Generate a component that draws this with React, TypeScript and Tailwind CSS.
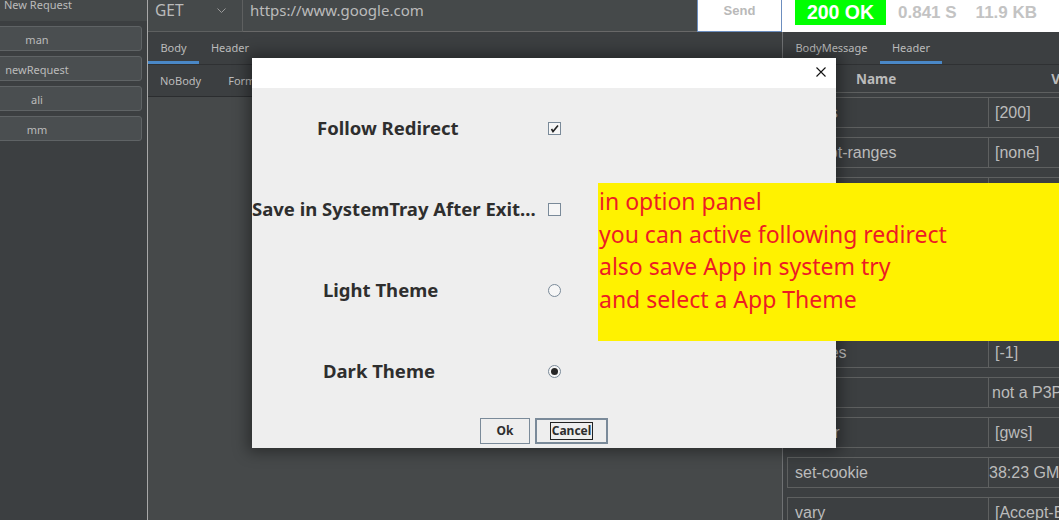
import React from 'react';

const requests = ['man', 'newRequest', 'ali', 'mm'];

const headers: { name: string; value: string; shift?: string }[] = [
  { name: 'status', value: '[200]' },
  { name: 'accept-ranges', value: '[none]' },
  { name: 'cache-control', value: '[private, max-age=0]' },
  { name: 'content-type', value: '[text/html; charset=ISO-8859-1]' },
  { name: 'date', value: '[Sat, 02 Oct 2021 08:38:23 GMT]' },
  { name: 'alt-svc', value: '[h3=":443"; ma=2592000]' },
  { name: 'expires', value: '[-1]' },
  { name: 'p3p', value: 'not a P3P policy! See g.co/p3phelp', shift: '-ml-[3px]' },
  { name: 'server', value: '[gws]' },
  { name: 'set-cookie', value: '38:23 GMT; path=/', shift: '-ml-[6px]' },
  { name: 'vary', value: '[Accept-Encoding]' },
];

// --- left list of saved requests ---
const Sidebar: React.FC = () => (
  <div className="w-[147px] h-full shrink-0 bg-[#3c3f41] overflow-hidden">
    <div className="h-[22px] bg-[#45494a] pl-[4px] text-[11px] leading-[11px] text-[#bbbbbb] whitespace-nowrap">
      <div className="-mt-[1px]">New Request</div>
    </div>
    <div className="flex flex-col gap-[5px] pt-[5px]">
      {requests.map((r) => (
        <div
          key={r}
          className="-ml-[68px] w-[210px] h-[25px] shrink-0 rounded-[3px] border border-[#5f6365] bg-[#4a4e50] flex items-center justify-center pt-[3px] text-[11px] text-[#bbbbbb]"
        >
          {r}
        </div>
      ))}
    </div>
  </div>
);

// --- request editor ---
const RequestPanel: React.FC = () => (
  <div className="w-[634px] h-full shrink-0 flex flex-col bg-[#46494a]">
    <div className="h-[32px] flex shrink-0">
      <div className="w-[95px] bg-[#45494a] border-r border-b border-[#5e6060] flex items-center justify-between pl-[7px] pr-[16px] text-[15.5px] text-[#bbbbbb]">
        <span className="-mt-[10px]">GET</span>
        <svg width="9" height="5" viewBox="0 0 9 5" className="-mt-[10px]">
          <path d="M0.5 0.5 L4.5 4.5 L8.5 0.5" fill="none" stroke="#9a9a9a" strokeWidth="1" />
        </svg>
      </div>
      <div className="flex-1 bg-[#45494a] border-b border-[#686868] pl-[7px] text-[15px] text-[#bbbbbb]">
        <span className="block -mt-[1px]">https://www.google.com</span>
      </div>
      <div className="w-[85px] bg-white border-l border-r border-b border-[#6c8ebf] flex justify-center font-['Liberation_Sans',sans-serif] font-bold text-[13px] text-[#b9b9b9]">
        <span className="mt-[1px]">Send</span>
      </div>
    </div>
    <div className="h-[33px] shrink-0 flex bg-[#3c3f41] border-b border-[#2f3133] text-[11px] text-[#bbbbbb]">
      <div className="w-[51px] flex items-center justify-center border-b-[3px] border-[#4a88c7] pt-[4px]">Body</div>
      <div className="w-[62px] flex items-center justify-center pt-[1px]">Header</div>
    </div>
    <div className="h-[32px] shrink-0 flex items-center gap-[27px] pl-[12px] pt-[2px] bg-[#3c3f41] border-b border-[#2b2d2f] text-[11px] text-[#bbbbbb]">
      <span>NoBody</span>
      <span>FormData</span>
    </div>
    <div className="flex-1" />
  </div>
);

// --- response viewer ---
const ResponsePanel: React.FC = () => (
  <div className="flex-1 h-full flex flex-col overflow-hidden">
    <div className="h-[32px] shrink-0 bg-white flex items-start pl-[13px] font-['Liberation_Sans',sans-serif] font-bold">
      <div className="w-[91px] h-[25px] bg-[#00ff00] text-white text-[19.5px] leading-[25px] text-center">200 OK</div>
      <span className="ml-[12px] text-[17px] leading-[25px] text-[#c3c3c3]">0.841 S</span>
      <span className="ml-[19px] text-[17px] leading-[25px] text-[#c3c3c3]">11.9 KB</span>
    </div>
    <div className="flex-1 flex flex-col bg-[#3c3f41] border-l border-[#6f7173]">
      <div className="h-[33px] shrink-0 flex border-b border-[#2f3133] text-[11px] text-[#bbbbbb]">
        <div className="w-[97px] flex items-center justify-center pt-[1px]">BodyMessage</div>
        <div className="w-[62px] flex items-center justify-center border-b-[3px] border-[#4a88c7] pt-[4px]">Header</div>
      </div>
      <div className="h-[28px] shrink-0 flex items-center border-b border-[#5e6060] pt-[1px] font-bold text-[13.5px] text-[#bbbbbb] whitespace-nowrap">
        <span className="ml-[73px]">Name</span>
        <span className="ml-[155px]">Value</span>
      </div>
      <div className="flex flex-col gap-[9px] pt-[4px] pl-[4px] font-['Liberation_Sans',sans-serif] text-[16px] text-[#bbbbbb]">
        {headers.map((h) => (
          <div key={h.name} className="h-[31px] shrink-0 flex">
            <div className="w-[202px] shrink-0 border border-[#5e6060] pl-[7px] pt-[1px] flex items-center">{h.name}</div>
            <div className="w-[220px] shrink-0 border-t border-b border-r border-[#5e6060] pl-[6px] pt-[1px] flex items-center overflow-hidden whitespace-nowrap">
              <span className={h.shift ?? ''}>{h.value}</span>
            </div>
          </div>
        ))}
      </div>
    </div>
  </div>
);

const CheckBox: React.FC<{ checked?: boolean }> = ({ checked }) => (
  <div className="w-[13px] h-[13px] shrink-0 border border-[#7a8a99] bg-[#f6f6f6] flex items-center justify-center">
    {checked && (
      <svg width="9" height="9" viewBox="0 0 9 9">
        <path d="M1.5 5 L3 7.5 L8 1.5" fill="none" stroke="#222" strokeWidth="1.6" />
      </svg>
    )}
  </div>
);

const Radio: React.FC<{ checked?: boolean }> = ({ checked }) => (
  <div className="w-[13px] h-[13px] shrink-0 rounded-full border border-[#7a8a99] bg-[#f6f6f6] flex items-center justify-center">
    {checked && <div className="w-[7px] h-[7px] rounded-full bg-[#262626]" />}
  </div>
);

// --- options dialog ---
const OptionsDialog: React.FC = () => {
  const rows: { label: string; pad: string; control: React.ReactNode }[] = [
    { label: 'Follow Redirect', pad: 'pl-[65px]', control: <CheckBox checked /> },
    { label: 'Save in SystemTray After Exit...', pad: 'pl-0', control: <CheckBox /> },
    { label: 'Light Theme', pad: 'pl-[71px]', control: <Radio /> },
    { label: 'Dark Theme', pad: 'pl-[71px]', control: <Radio checked /> },
  ];

  return (
    <div className="absolute left-[252px] top-[58px] w-[584px] h-[390px] bg-[#eeeeee] flex flex-col shadow-[0_0_14px_4px_rgba(0,0,0,0.4)]">
      <div className="h-[30px] shrink-0 bg-white flex justify-end pr-[10px] pt-[9px]">
        <svg width="10" height="10" viewBox="0 0 10 10">
          <path d="M0.5 0.5 L9.5 9.5 M9.5 0.5 L0.5 9.5" stroke="#111" strokeWidth="1.1" />
        </svg>
      </div>
      {rows.map((r) => (
        <div key={r.label} className="h-[81px] shrink-0 flex items-center">
          <div className={`w-[296px] shrink-0 overflow-hidden whitespace-nowrap font-bold text-[18.5px] text-[#2e2e2e] -mt-[2px] ${r.pad}`}>
            {r.label}
          </div>
          {r.control}
        </div>
      ))}
      <div className="flex justify-center gap-[5px] pt-[6px] font-bold text-[12px] text-[#2e2e2e]">
        <div className="w-[50px] h-[26px] border border-[#7a8a99] bg-[#eeeeee] flex items-center justify-center">Ok</div>
        <div className="w-[73px] h-[26px] border-2 border-[#7a8a99] bg-[#eeeeee] flex items-center justify-center">
          <span className="h-[18px] px-[1px] border border-[#222] leading-[16px]">Cancel</span>
        </div>
      </div>
    </div>
  );
};

const App: React.FC = () => (
  <div className="relative w-[1059px] h-[520px] overflow-hidden flex bg-[#3c3f41] font-['Noto_Sans',sans-serif]">
    <Sidebar />
    <div className="w-px h-full shrink-0 bg-[#a8a8a8]" />
    <RequestPanel />
    <ResponsePanel />
    <OptionsDialog />
    <div className="absolute left-[598px] top-[183px] w-[461px] h-[158px] bg-[#fff200] pl-[1px] pt-[2px] text-[23px] leading-[32.67px] text-[#ed1c24] whitespace-nowrap">
      <div>in option panel</div>
      <div>you can active following redirect</div>
      <div>also save App in system try</div>
      <div>and select a App Theme</div>
    </div>
  </div>
);

export default App;
